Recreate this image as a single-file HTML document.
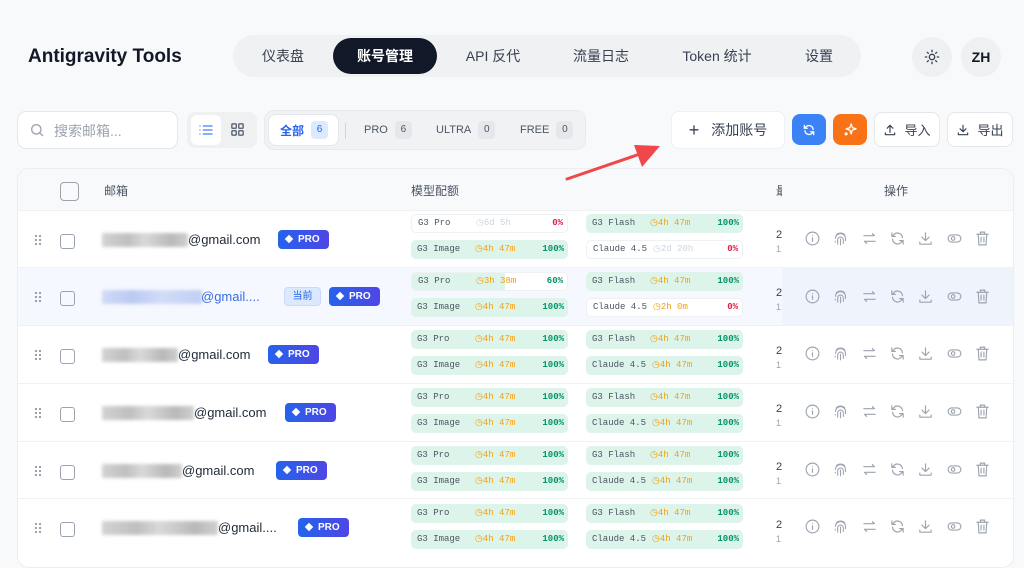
<!DOCTYPE html>
<html><head><meta charset="utf-8"><style>
*{box-sizing:border-box;margin:0;padding:0}
body{width:1024px;height:557px;overflow:hidden;background:#f8f9fb;font-family:"Liberation Sans","Noto Sans CJK SC",sans-serif;color:#1f2937;position:relative}
.a{position:absolute}
.nav{left:233px;top:35px;width:628px;height:42px;background:#f0f1f3;border-radius:21px}
.ni{position:absolute;top:0;height:42px;line-height:42px;font-size:14px;color:#374151;transform:translateX(-50%);white-space:nowrap}
.btn{position:absolute;border-radius:8px;display:flex;align-items:center;justify-content:center;font-size:13px}
.q{position:absolute;width:157px;height:19px;border-radius:5px;font-family:"Liberation Mono","Noto Sans CJK SC",monospace;font-size:9px;line-height:19px;overflow:hidden}
.q.g{background:#dcf4ea}
.q.w{background:#fff;border:1px solid #eef0f2;line-height:17px}
.q span{position:absolute;top:0}
.q .n{left:6px;color:#4b5563}
.q .t{left:64px;color:#f59e0b}
.q .t.c{left:66px}
.q .t.gr{color:#cbd5e1}
.q .p{right:4px;color:#059669;font-weight:bold}
.q .p.r{color:#e11d48}
.row{position:absolute;left:18px;width:995px;height:58px;border-top:1px solid #f0f1f3;background:#fff}
.blur{position:absolute;height:14px;background:linear-gradient(90deg,#c8c8c8,#b0b0b0 30%,#d0d0d0 50%,#a8a8a8 80%,#c4c4c4);filter:blur(1.5px);opacity:.8}
.em{position:absolute;font-size:13px;color:#1f2937}
.pro{position:absolute;height:19px;border-radius:4px;background:linear-gradient(90deg,#2563eb,#4f46e5);color:#fff;font-size:10px;font-weight:bold;line-height:19px;padding-left:20px;width:51px}
.pro:before{content:"";position:absolute;left:8px;top:6px;width:6px;height:6px;background:#fff;transform:rotate(45deg)}
.cb{position:absolute;width:15px;height:15px;border:1.6px solid #9ca3af;border-radius:3px}
.dr{position:absolute;width:8px;height:12px;background:radial-gradient(circle,#9ca3af 1.1px,transparent 1.3px) 0 0/4px 4px}
.flt{position:absolute;top:0;height:38px;display:flex;align-items:center;font-size:11px;color:#4b5563}
.bd{display:inline-block;margin-left:7px;width:17px;height:18px;background:#e5e7eb;border-radius:4px;text-align:center;line-height:18px;font-size:10px}
</style></head><body>
<svg width="0" height="0" style="position:absolute">
<defs>
<symbol id="i1" viewBox="0 0 24 24"><g fill="none" stroke="#9ca3af" stroke-width="1.6" stroke-linecap="round"><circle cx="12" cy="12" r="9"/><path d="M12 11v5M12 8v.01"/></g></symbol>
<symbol id="i2" viewBox="0 0 24 24"><g fill="none" stroke="#9ca3af" stroke-width="1.5" stroke-linecap="round"><path d="M6 7a8 8 0 0112 0M5 12a7 7 0 0114 0v3M8 20v-6a4 4 0 018 0v5M12 13v8M4.5 16v1"/></g></symbol>
<symbol id="i3" viewBox="0 0 24 24"><g fill="none" stroke="#9ca3af" stroke-width="1.6" stroke-linecap="round" stroke-linejoin="round"><path d="M4 8h15l-3-3M20 16H5l3 3"/></g></symbol>
<symbol id="i4" viewBox="0 0 24 24"><g fill="none" stroke="#9ca3af" stroke-width="1.6" stroke-linecap="round" stroke-linejoin="round"><path d="M19 11a7 7 0 00-12.5-4L4 9M5 13a7 7 0 0012.5 4L20 15M4 4v5h5M20 20v-5h-5"/></g></symbol>
<symbol id="i5" viewBox="0 0 24 24"><g fill="none" stroke="#9ca3af" stroke-width="1.6" stroke-linecap="round" stroke-linejoin="round"><path d="M12 4v11M7 10l5 5 5-5M4 17v3h16v-3"/></g></symbol>
<symbol id="i6" viewBox="0 0 24 24"><g fill="none" stroke="#9ca3af" stroke-width="1.6"><rect x="3" y="7" width="18" height="10" rx="5"/><circle cx="10" cy="12" r="2.5"/></g></symbol>
<symbol id="i7" viewBox="0 0 24 24"><g fill="none" stroke="#9ca3af" stroke-width="1.6" stroke-linecap="round"><path d="M4 6h16M9 6V3h6v3M6 6l1 15h10l1-15M10 10v7M14 10v7"/></g></symbol>
<symbol id="acts" viewBox="0 0 200 17">
<use href="#i1" x="0" width="17" height="17"/><use href="#i2" x="28" width="17" height="17"/><use href="#i3" x="57" width="17" height="17"/><use href="#i4" x="85" width="17" height="17"/><use href="#i5" x="113" width="17" height="17"/><use href="#i6" x="142" width="17" height="17"/><use href="#i7" x="170" width="17" height="17"/>
</symbol>
</defs></svg>

<div class="a" style="left:28px;top:46px;font-size:19px;font-weight:bold;color:#111827">Antigravity Tools</div>
<div class="a nav">
<div class="ni" style="left:50px">仪表盘</div>
<div style="position:absolute;left:100px;top:3px;width:104px;height:36px;border-radius:18px;background:#111827"></div>
<div class="ni" style="left:152px;color:#fff;font-weight:bold">账号管理</div>
<div class="ni" style="left:260px">API 反代</div>
<div class="ni" style="left:368px">流量日志</div>
<div class="ni" style="left:484px">Token 统计</div>
<div class="ni" style="left:586px">设置</div>
</div>
<div class="a" style="left:912px;top:37px;width:40px;height:40px;border-radius:20px;background:#eef0f2"><svg style="position:absolute;left:12px;top:12px" width="16" height="16" viewBox="0 0 24 24" fill="none" stroke="#374151" stroke-width="2" stroke-linecap="round"><circle cx="12" cy="12" r="4"/><path d="M12 2v2M12 20v2M2 12h2M20 12h2M5 5l1.5 1.5M17.5 17.5L19 19M5 19l1.5-1.5M17.5 6.5L19 5"/></svg></div>
<div class="a" style="left:961px;top:37px;width:40px;height:40px;border-radius:20px;background:#eef0f2;font-size:14px;font-weight:bold;line-height:40px;text-align:center;color:#111827">ZH</div>

<div class="a" style="left:17px;top:111px;width:161px;height:38px;background:#fff;border:1px solid #e5e7eb;border-radius:9px"><svg style="position:absolute;left:11px;top:10px" width="16" height="16" viewBox="0 0 24 24" fill="none" stroke="#9ca3af" stroke-width="2"><circle cx="11" cy="11" r="7"/><path d="M16 16l5 5"/></svg><span style="position:absolute;left:36px;top:9px;font-size:14px;color:#9ca3af">搜索邮箱...</span></div>
<div class="a" style="left:187px;top:112px;width:70px;height:36px;background:#eef0f2;border-radius:8px"><div style="position:absolute;left:4px;top:3px;width:30px;height:30px;background:#fff;border-radius:6px"></div>
<svg style="position:absolute;left:11px;top:10px" width="16" height="16" viewBox="0 0 24 24" fill="none" stroke="#3b82f6" stroke-width="2" stroke-linecap="round"><path d="M8 6h13M8 12h13M8 18h13M3 6h.01M3 12h.01M3 18h.01"/></svg>
<svg style="position:absolute;left:43px;top:10px" width="15" height="15" viewBox="0 0 24 24" fill="none" stroke="#4b5563" stroke-width="2"><rect x="3" y="3" width="7" height="7" rx="1"/><rect x="14" y="3" width="7" height="7" rx="1"/><rect x="3" y="14" width="7" height="7" rx="1"/><rect x="14" y="14" width="7" height="7" rx="1"/></svg></div>
<div class="a" style="left:264px;top:110px;width:322px;height:40px;background:#f1f2f4;border:1px solid #e8eaed;border-radius:10px">
<div style="position:absolute;left:3px;top:3px;width:71px;height:32px;background:#fff;border-radius:8px;border:1px solid #e5e7eb"></div>
<div class="flt" style="left:15px"><b style="color:#2563eb;font-size:12px">全部</b><span class="bd" style="background:#dbeafe;color:#2563eb">6</span></div>
<div style="position:absolute;left:80px;top:12px;width:1px;height:16px;background:#d1d5db"></div>
<div class="flt" style="left:99px">PRO<span class="bd">6</span></div>
<div class="flt" style="left:171px">ULTRA<span class="bd">0</span></div>
<div class="flt" style="left:255px">FREE<span class="bd">0</span></div>
</div>
<div class="btn" style="left:671px;top:111px;width:114px;height:38px;background:#fff;border:1px solid #eef0f2;color:#374151;font-size:14px"><span style="font-size:18px;margin-right:12px;font-weight:300">+</span>添加账号</div>
<div class="btn" style="left:792px;top:114px;width:34px;height:31px;background:#3b82f6"><svg width="14" height="14" viewBox="0 0 24 24" fill="none" stroke="#fff" stroke-width="2.2" stroke-linecap="round"><path d="M19 11a7 7 0 00-12.5-4L4 9M5 13a7 7 0 0012.5 4L20 15M4 4v5h5M20 20v-5h-5"/></svg></div>
<div class="btn" style="left:833px;top:114px;width:34px;height:31px;background:#f97316"><svg width="15" height="15" viewBox="0 0 24 24" fill="none" stroke="#fff" stroke-width="2" stroke-linejoin="round"><path d="M13 3l2 6 6 2-6 2-2 6-2-6-6-2 6-2z"/><circle cx="5" cy="19" r="1.5"/></svg></div>
<div class="btn" style="left:874px;top:112px;width:66px;height:35px;background:#fff;border:1px solid #e5e7eb;color:#374151"><svg width="14" height="14" viewBox="0 0 24 24" fill="none" stroke="#374151" stroke-width="2" stroke-linecap="round" stroke-linejoin="round" style="margin-right:7px"><path d="M12 16V4M7 9l5-5 5 5M4 17v3h16v-3"/></svg>导入</div>
<div class="btn" style="left:947px;top:112px;width:66px;height:35px;background:#fff;border:1px solid #e5e7eb;color:#374151"><svg width="14" height="14" viewBox="0 0 24 24" fill="none" stroke="#374151" stroke-width="2" stroke-linecap="round" stroke-linejoin="round" style="margin-right:7px"><path d="M12 4v11M7 10l5 5 5-5M4 17v3h16v-3"/></svg>导出</div>

<div class="a" style="left:17px;top:168px;width:997px;height:400px;background:#fff;border:1px solid #eceef1;border-radius:12px;overflow:hidden">
<div style="position:absolute;left:0;top:0;width:100%;height:42px;background:#f8f9fb"></div>
<div class="cb" style="left:42px;top:13px;width:19px;height:19px;border-radius:4px"></div>
<span style="position:absolute;left:86px;top:13px;font-size:12px;color:#4b5563">邮箱</span>
<span style="position:absolute;left:393px;top:13px;font-size:12px;color:#4b5563">模型配额</span>
<span style="position:absolute;left:758px;top:13px;font-size:12px;color:#4b5563;width:6px;overflow:hidden">最</span>
<span style="position:absolute;left:866px;top:13px;font-size:12px;color:#4b5563">操作</span>
</div>

<div class="row" style="top:210px">
<div class="dr" style="left:16px;top:23px"></div><div class="cb" style="left:42px;top:23px"></div>
<div class="blur" style="left:84px;top:22px;width:86px"></div><div class="em" style="left:170px;top:21px">@gmail.com</div>
<div class="pro" style="left:260px;top:19px">PRO</div>
</div>
<div class="row" style="top:267px;background:#f5f8fe">
<div style="position:absolute;left:764px;top:0;width:231px;height:58px;background:#eef3fc"></div>
<div class="dr" style="left:16px;top:23px"></div><div class="cb" style="left:42px;top:23px"></div>
<div class="blur" style="left:84px;top:22px;width:100px;background:linear-gradient(90deg,#c7d4f5,#aebff0 30%,#c9d5f6 60%,#b5c5f1)"></div><div class="em" style="left:183px;top:21px;color:#3b6ee0">@gmail....</div>
<div style="position:absolute;left:266px;top:19px;width:37px;height:19px;border-radius:4px;background:#dbe8fd;border:1px solid #c9dbfb;color:#2563eb;font-size:10px;text-align:center;line-height:17px">当前</div>
<div class="pro" style="left:311px;top:19px">PRO</div>
</div>
<div class="row" style="top:325px">
<div class="dr" style="left:16px;top:23px"></div><div class="cb" style="left:42px;top:23px"></div>
<div class="blur" style="left:84px;top:22px;width:76px"></div><div class="em" style="left:160px;top:21px">@gmail.com</div>
<div class="pro" style="left:250px;top:19px">PRO</div>
</div>
<div class="row" style="top:383px">
<div class="dr" style="left:16px;top:23px"></div><div class="cb" style="left:42px;top:23px"></div>
<div class="blur" style="left:84px;top:22px;width:92px"></div><div class="em" style="left:176px;top:21px">@gmail.com</div>
<div class="pro" style="left:267px;top:19px">PRO</div>
</div>
<div class="row" style="top:441px">
<div class="dr" style="left:16px;top:23px"></div><div class="cb" style="left:42px;top:23px"></div>
<div class="blur" style="left:84px;top:22px;width:80px"></div><div class="em" style="left:164px;top:21px">@gmail.com</div>
<div class="pro" style="left:258px;top:19px">PRO</div>
</div>
<div class="row" style="top:498px">
<div class="dr" style="left:16px;top:23px"></div><div class="cb" style="left:42px;top:23px"></div>
<div class="blur" style="left:84px;top:22px;width:116px"></div><div class="em" style="left:200px;top:21px">@gmail....</div>
<div class="pro" style="left:280px;top:19px">PRO</div>
</div>

<div class="q w" style="left:411px;top:214px"><span class="n">G3 Pro</span><span class="t gr">◷6d 5h</span><span class="p r">0%</span></div>
<div class="q g" style="left:411px;top:240px"><span class="n">G3 Image</span><span class="t">◷4h 47m</span><span class="p">100%</span></div>
<div class="q g" style="left:586px;top:214px"><span class="n">G3 Flash</span><span class="t">◷4h 47m</span><span class="p">100%</span></div>
<div class="q w" style="left:586px;top:240px"><span class="n">Claude 4.5</span><span class="t c gr">◷2d 20h</span><span class="p r">0%</span></div>
<div class="q w" style="left:411px;top:272px;background:linear-gradient(90deg,#dcf4ea 60%,#fff 60%)"><span class="n">G3 Pro</span><span class="t">◷3h 38m</span><span class="p">60%</span></div>
<div class="q g" style="left:411px;top:298px"><span class="n">G3 Image</span><span class="t">◷4h 47m</span><span class="p">100%</span></div>
<div class="q g" style="left:586px;top:272px"><span class="n">G3 Flash</span><span class="t">◷4h 47m</span><span class="p">100%</span></div>
<div class="q w" style="left:586px;top:298px"><span class="n">Claude 4.5</span><span class="t c">◷2h 0m</span><span class="p r">0%</span></div>
<div class="q g" style="left:411px;top:330px"><span class="n">G3 Pro</span><span class="t">◷4h 47m</span><span class="p">100%</span></div>
<div class="q g" style="left:411px;top:356px"><span class="n">G3 Image</span><span class="t">◷4h 47m</span><span class="p">100%</span></div>
<div class="q g" style="left:586px;top:330px"><span class="n">G3 Flash</span><span class="t">◷4h 47m</span><span class="p">100%</span></div>
<div class="q g" style="left:586px;top:356px"><span class="n">Claude 4.5</span><span class="t c">◷4h 47m</span><span class="p">100%</span></div>
<div class="q g" style="left:411px;top:388px"><span class="n">G3 Pro</span><span class="t">◷4h 47m</span><span class="p">100%</span></div>
<div class="q g" style="left:411px;top:414px"><span class="n">G3 Image</span><span class="t">◷4h 47m</span><span class="p">100%</span></div>
<div class="q g" style="left:586px;top:388px"><span class="n">G3 Flash</span><span class="t">◷4h 47m</span><span class="p">100%</span></div>
<div class="q g" style="left:586px;top:414px"><span class="n">Claude 4.5</span><span class="t c">◷4h 47m</span><span class="p">100%</span></div>
<div class="q g" style="left:411px;top:446px"><span class="n">G3 Pro</span><span class="t">◷4h 47m</span><span class="p">100%</span></div>
<div class="q g" style="left:411px;top:472px"><span class="n">G3 Image</span><span class="t">◷4h 47m</span><span class="p">100%</span></div>
<div class="q g" style="left:586px;top:446px"><span class="n">G3 Flash</span><span class="t">◷4h 47m</span><span class="p">100%</span></div>
<div class="q g" style="left:586px;top:472px"><span class="n">Claude 4.5</span><span class="t c">◷4h 47m</span><span class="p">100%</span></div>
<div class="q g" style="left:411px;top:504px"><span class="n">G3 Pro</span><span class="t">◷4h 47m</span><span class="p">100%</span></div>
<div class="q g" style="left:411px;top:530px"><span class="n">G3 Image</span><span class="t">◷4h 47m</span><span class="p">100%</span></div>
<div class="q g" style="left:586px;top:504px"><span class="n">G3 Flash</span><span class="t">◷4h 47m</span><span class="p">100%</span></div>
<div class="q g" style="left:586px;top:530px"><span class="n">Claude 4.5</span><span class="t c">◷4h 47m</span><span class="p">100%</span></div>

<div class="a" style="left:776px;top:228px;width:6px;overflow:hidden;font-size:11px;line-height:14px;color:#374151">2<br><span style="color:#9ca3af;font-size:9px">1:</span></div>
<div class="a" style="left:776px;top:286px;width:6px;overflow:hidden;font-size:11px;line-height:14px;color:#374151">2<br><span style="color:#9ca3af;font-size:9px">1:</span></div>
<div class="a" style="left:776px;top:344px;width:6px;overflow:hidden;font-size:11px;line-height:14px;color:#374151">2<br><span style="color:#9ca3af;font-size:9px">1:</span></div>
<div class="a" style="left:776px;top:402px;width:6px;overflow:hidden;font-size:11px;line-height:14px;color:#374151">2<br><span style="color:#9ca3af;font-size:9px">1:</span></div>
<div class="a" style="left:776px;top:460px;width:6px;overflow:hidden;font-size:11px;line-height:14px;color:#374151">2<br><span style="color:#9ca3af;font-size:9px">1:</span></div>
<div class="a" style="left:776px;top:518px;width:6px;overflow:hidden;font-size:11px;line-height:14px;color:#374151">2<br><span style="color:#9ca3af;font-size:9px">1:</span></div>
<svg class="a" style="left:804px;top:230px" width="200" height="17"><use href="#acts"/></svg>
<svg class="a" style="left:804px;top:288px" width="200" height="17"><use href="#acts"/></svg>
<svg class="a" style="left:804px;top:345px" width="200" height="17"><use href="#acts"/></svg>
<svg class="a" style="left:804px;top:403px" width="200" height="17"><use href="#acts"/></svg>
<svg class="a" style="left:804px;top:461px" width="200" height="17"><use href="#acts"/></svg>
<svg class="a" style="left:804px;top:518px" width="200" height="17"><use href="#acts"/></svg>

<svg class="a" style="left:560px;top:135px" width="110" height="50"><path d="M7 44L80 19" stroke="#f0484a" stroke-width="3" stroke-linecap="round"/><path d="M100 11L74 10 82 32z" fill="#f0484a"/></svg>
</body></html>
